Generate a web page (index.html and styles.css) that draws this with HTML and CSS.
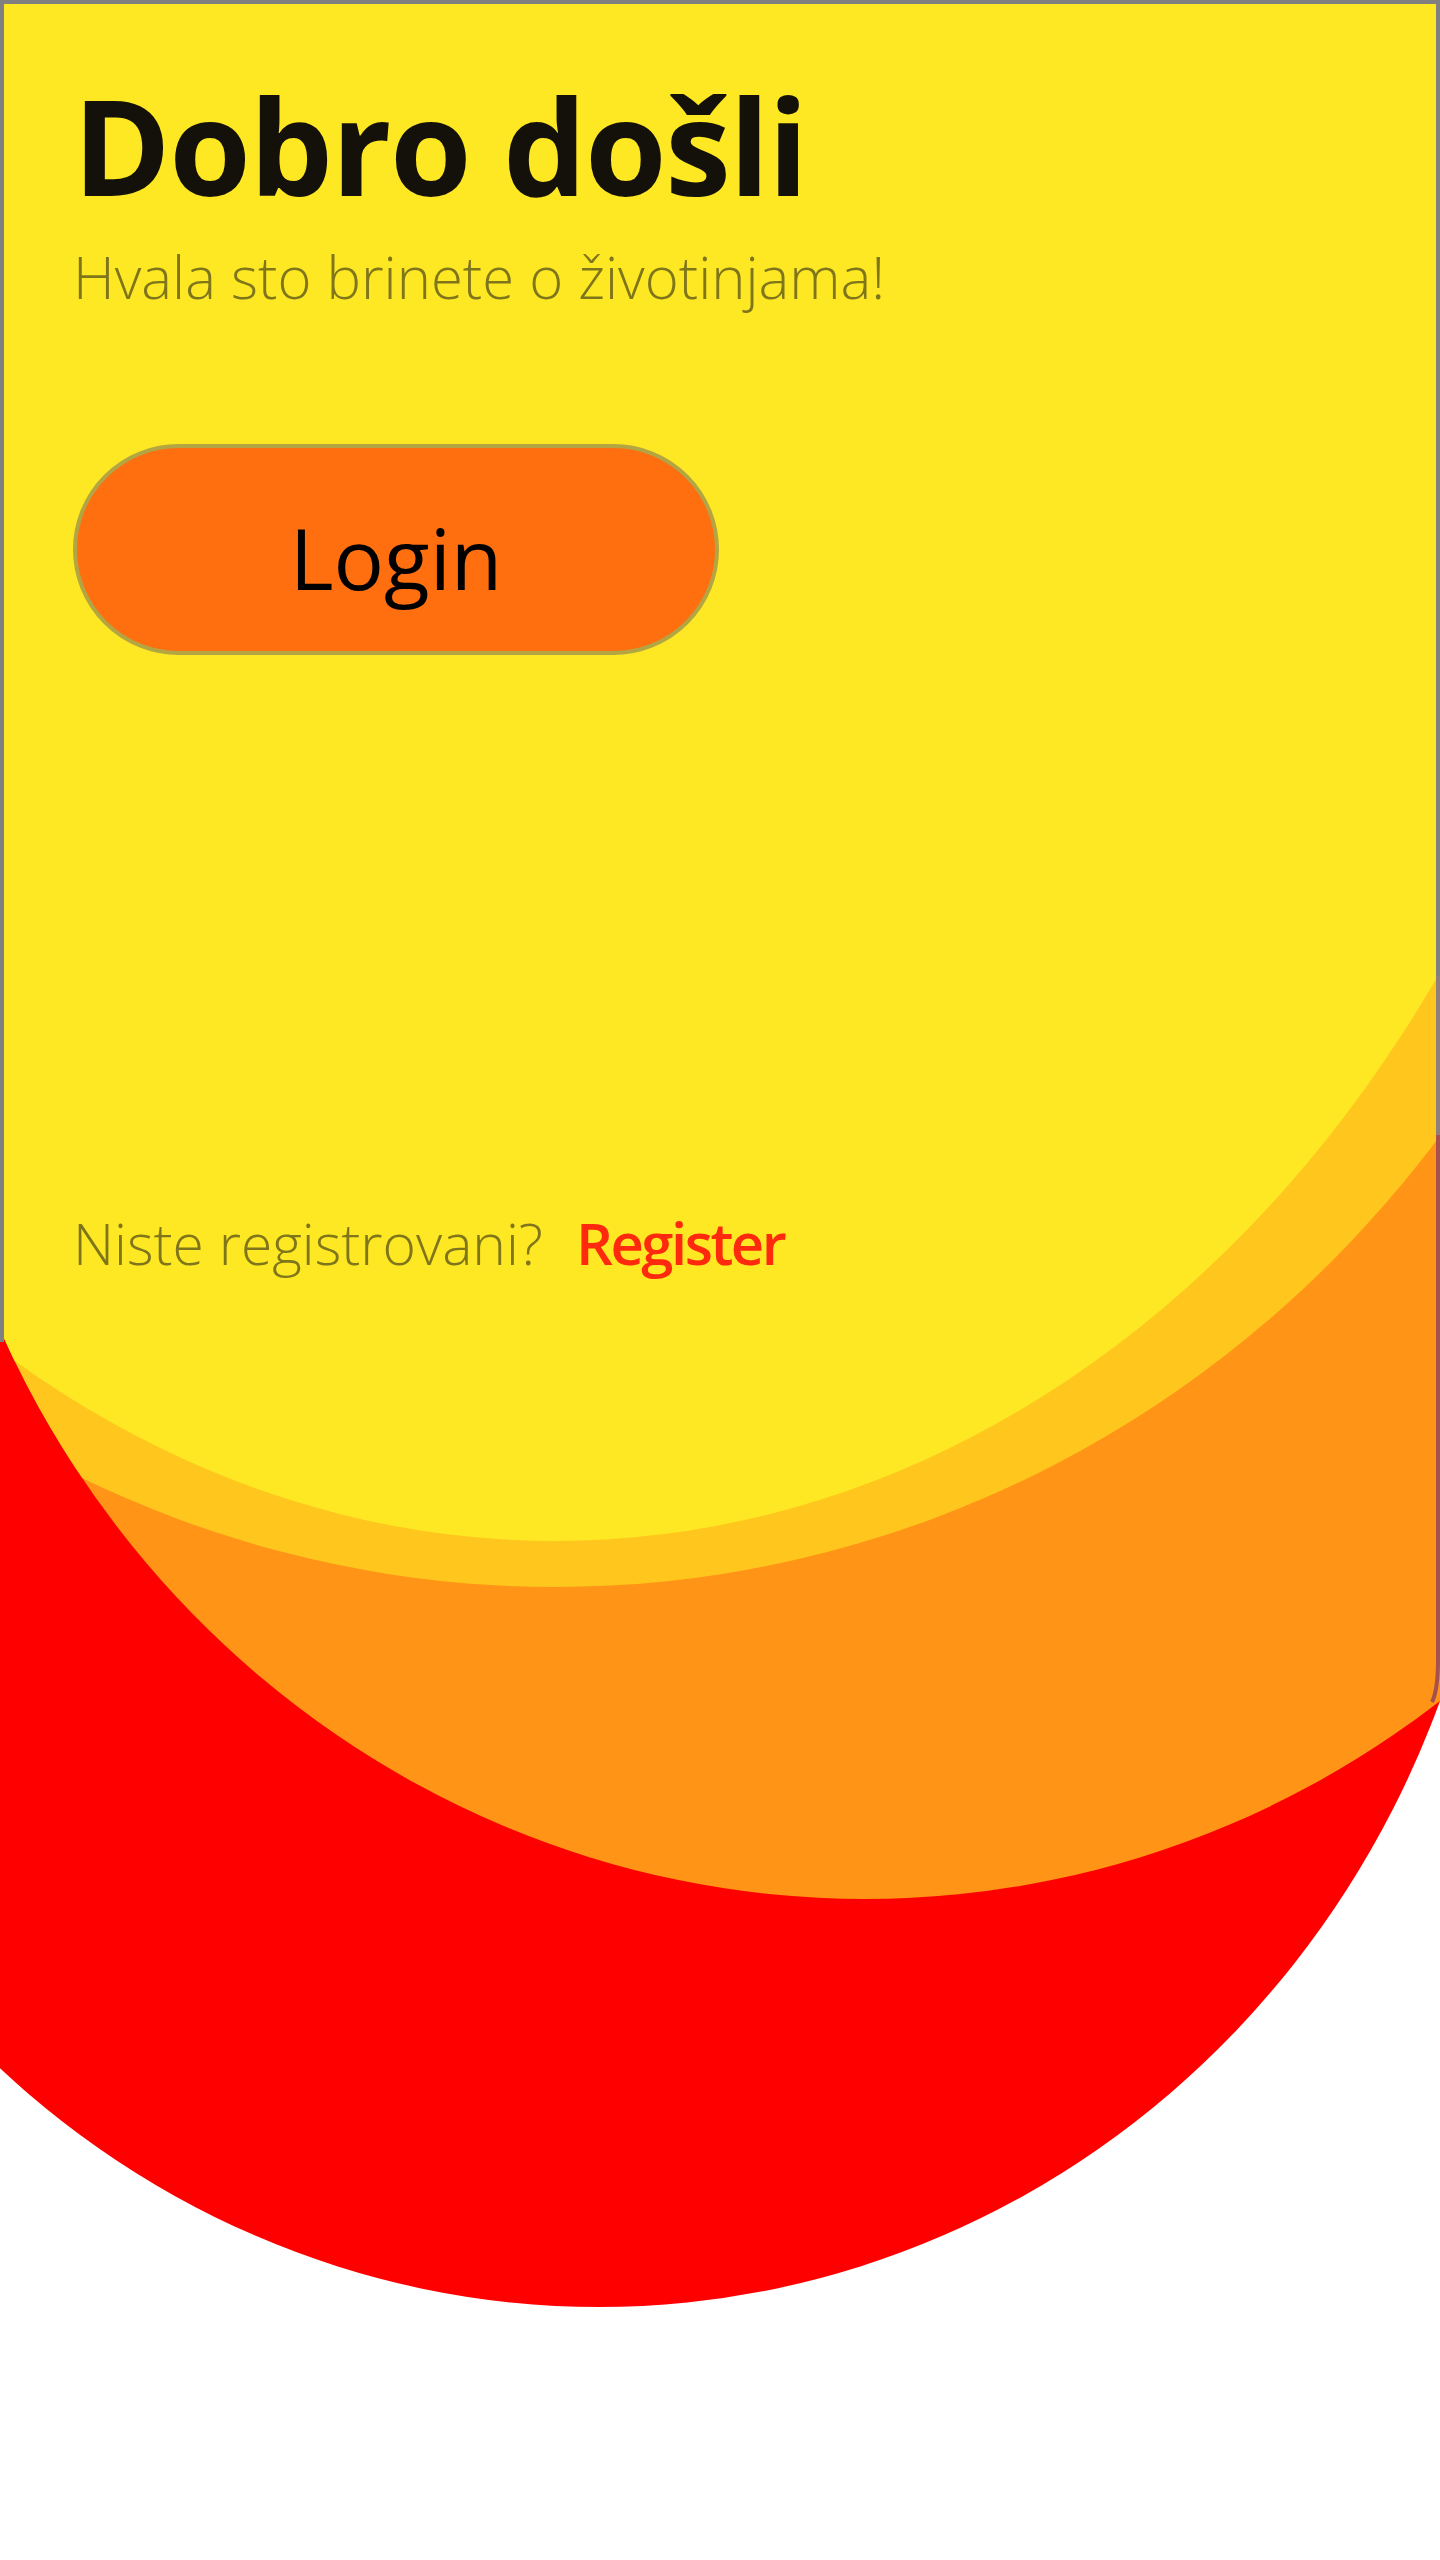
FILE: index.html
```html
<!DOCTYPE html>
<html lang="sr">
<head>
<meta charset="utf-8">
<title>Dobro došli</title>
<link rel="stylesheet" href="styles.css">
</head>
<body>
<div class="screen">
  <svg class="backdrop" viewBox="0 0 1440 2560" width="1440" height="2560" aria-hidden="true">
    <defs>
      <clipPath id="panel">
        <rect x="0" y="0" width="1440" height="900"/>
        <ellipse cx="865" cy="928" rx="950" ry="971"/>
      </clipPath>
    </defs>
    <ellipse cx="599" cy="1366" rx="900" ry="941" fill="#ff0000"/>
    <g clip-path="url(#panel)">
      <rect x="0" y="0" width="1440" height="2560" fill="#ff9416"/>
      <ellipse cx="555" cy="422" rx="1120" ry="1165" fill="#ffc61e"/>
      <ellipse cx="555" cy="158" rx="1095" ry="1383" fill="#fee823"/>
    </g>
    <path d="M2 1342 V2 H1438 V976" fill="none" stroke="#808080" stroke-width="4"/>
    <path d="M1438 976 V1135" fill="none" stroke="#8e7f7d" stroke-width="4"/>
    <path d="M1438 1135 V1660 Q1438 1690 1432 1702" fill="none" stroke="#a65050" stroke-width="4"/>
  </svg>

  <main class="content">
    <h1 class="title">Dobro došli</h1>
    <p class="subtitle">Hvala sto brinete o životinjama!</p>
    <button class="login-btn" type="button">Login</button>
    <div class="register-row">
      <span class="register-q">Niste registrovani?</span>
      <a class="register-link" href="#">Register</a>
    </div>
  </main>
</div>
</body>
</html>
```

FILE: styles.css
```css
html, body {
  margin: 0;
  padding: 0;
  overflow: hidden;
  background: #ffffff;
}

.screen {
  position: relative;
  width: 1440px;
  height: 2560px;
  overflow: hidden;
  font-family: "Open Sans", "Noto Sans", "Liberation Sans", sans-serif;
}

.backdrop {
  position: absolute;
  top: 0;
  left: 0;
  z-index: 0;
  display: block;
}

.content {
  position: relative;
  z-index: 1;
  display: flex;
  flex-direction: column;
  align-items: flex-start;
  padding: 79px 0 0 73px;
}

.title {
  margin: 0;
  font-size: 132px;
  line-height: 1;
  font-weight: 700;
  color: #131109;
  letter-spacing: -1.5px;
}

.subtitle {
  margin: 37px 0 0 0;
  font-size: 58px;
  line-height: 1;
  font-weight: 300;
  color: #7f751b;
}

.login-btn {
  margin-top: 138px;
  box-sizing: border-box;
  width: 646px;
  height: 211px;
  border: 4px solid #b4a543;
  border-radius: 106px;
  background: #ff6f10;
  color: #000000;
  font-family: inherit;
  font-size: 84px;
  font-weight: 400;
  line-height: 1;
  padding: 16px 0 0 0;
  cursor: pointer;
}

.register-row {
  margin-top: 559px;
  display: flex;
  align-items: baseline;
  gap: 33px;
  font-size: 57px;
  line-height: 1;
}

.register-q {
  font-weight: 300;
  color: #7f751b;
}

.register-link {
  font-size: 58px;
  font-weight: 600;
  color: #ff2a0e;
  text-decoration: none;
  letter-spacing: -2.5px;
}
```
